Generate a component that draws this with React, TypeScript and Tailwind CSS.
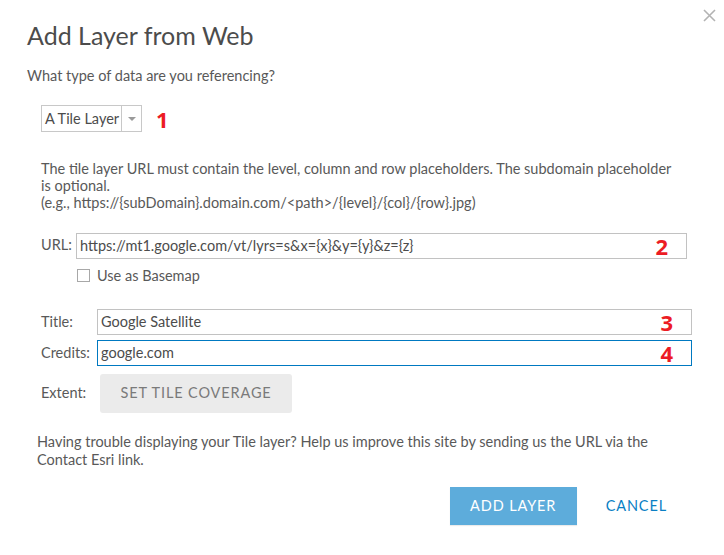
import { useState } from "react"

function Marker({ n }: { n: string }) {
  return (
    <span className="text-[22px] font-bold leading-none text-[#ec1c24]" style={{ fontFamily: "'Open Sans', sans-serif" }}>
      {n}
    </span>
  )
}

function TextField({
  value,
  marker,
  focused,
  className,
}: {
  value: string
  marker: string
  focused?: boolean
  className: string
}) {
  return (
    <div
      className={`flex h-[26px] items-center justify-between border pl-[3px] pr-[18px] ${
        focused ? "border-[#0079c1]" : "border-[#c2c2c2]"
      } ${className}`}
    >
      <span className="text-[14.5px] text-[#4c4c4c]">{value}</span>
      <Marker n={marker} />
    </div>
  )
}

export default function App() {
  const [basemap, setBasemap] = useState(false)

  return (
    <div
      className="relative h-[555px] w-[724px] overflow-hidden bg-white text-[14.5px] text-[#595959]"
      style={{ fontFamily: "Lato, 'Noto Sans', sans-serif" }}
    >
      <button className="absolute right-[7px] top-[8px] p-[1px] text-[#b3b3b3]" aria-label="Close">
        <svg width="13" height="13" viewBox="0 0 13 13" fill="none" stroke="currentColor" strokeWidth="1.6">
          <path d="M1 1L12 12M12 1L1 12" />
        </svg>
      </button>

      <div className="px-[27px] pt-[19px]">
        <h1 className="text-[25px] font-normal leading-[32px] text-[#4c4c4c]">Add Layer from Web</h1>
        <p className="mt-[16px] leading-[17px]">What type of data are you referencing?</p>

        <div className="ml-[14px] mt-[21px] flex items-center gap-[14px]">
          <div className="flex h-[27px] w-[101px] items-stretch border border-[#c8c8c8]">
            <span className="flex flex-1 items-center pl-[3px] text-[#4c4c4c]">A Tile Layer</span>
            <span className="flex w-[20px] items-center justify-center border-l border-[#c8c8c8]">
              <svg width="8" height="4" viewBox="0 0 8 4">
                <path d="M0 0H8L4 4Z" fill="#9a9a9a" />
              </svg>
            </span>
          </div>
          <Marker n="1" />
        </div>

        <div className="ml-[14px] mt-[28px] leading-[17px]">
          <p>
            The tile layer URL must contain the level, column and row placeholders. The subdomain placeholder
            <br />
            is optional.
          </p>
          <p>{"(e.g., https://{subDomain}.domain.com/<path>/{level}/{col}/{row}.jpg)"}</p>
        </div>

        <div className="ml-[14px] mt-[22px] flex items-start">
          <span className="mt-[1px] w-[35px]">URL:</span>
          <div className="flex flex-col">
            <TextField
              value="https://mt1.google.com/vt/lyrs=s&x={x}&y={y}&z={z}"
              marker="2"
              className="w-[611px]"
            />
            <label className="ml-[1px] mt-[6px] flex cursor-pointer items-center gap-[7px]">
              <input
                type="checkbox"
                checked={basemap}
                onChange={(e) => setBasemap(e.target.checked)}
                className="h-[13px] w-[13px] appearance-none border border-[#a8a8a8] bg-white"
              />
              Use as Basemap
            </label>
          </div>
        </div>

        <div className="ml-[14px] mt-[22px] flex flex-col gap-[5px]">
          <div className="flex items-center">
            <span className="w-[56px]">Title:</span>
            <TextField value="Google Satellite" marker="3" className="w-[595px]" />
          </div>
          <div className="flex items-center">
            <span className="w-[56px]">Credits:</span>
            <TextField value="google.com" marker="4" focused className="w-[595px]" />
          </div>
          <div className="mt-[3px] flex items-center">
            <span className="w-[59px]">Extent:</span>
            <button className="h-[39px] w-[192px] rounded-[3px] bg-[#ebebeb] tracking-[0.06em] text-[#7a7a7a]">
              SET TILE COVERAGE
            </button>
          </div>
        </div>

        <p className="ml-[10px] mt-[20px] leading-[18px]">
          Having trouble displaying your Tile layer? Help us improve this site by sending us the URL via the
          <br />
          Contact Esri link.
        </p>

        <div className="mt-[18px] flex items-center justify-end gap-[29px] pr-[30px]">
          <button className="h-[38px] w-[127px] bg-[#5dacdb] text-[14.5px] tracking-[0.06em] text-white shadow-[0_1px_1px_rgba(0,0,0,0.08)]">
            ADD LAYER
          </button>
          <button className="text-[14.5px] tracking-[0.06em] text-[#0a7fc4]">CANCEL</button>
        </div>
      </div>
    </div>
  )
}
